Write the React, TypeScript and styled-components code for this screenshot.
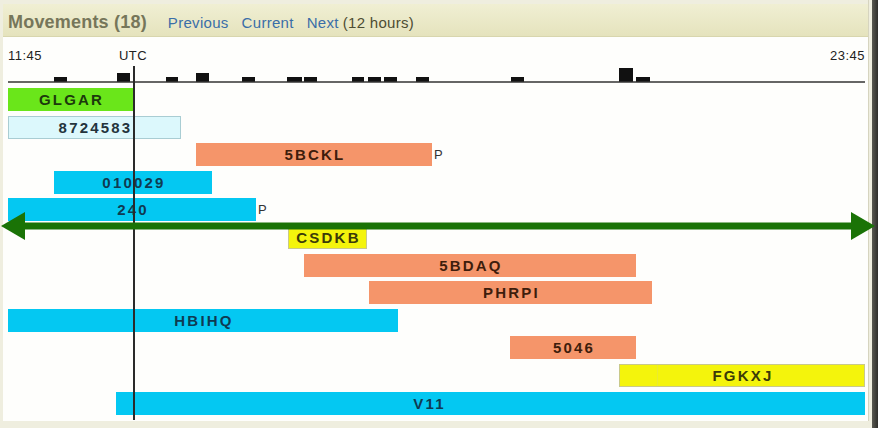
import React from 'react';
import styled, { createGlobalStyle } from 'styled-components';

// 12 hour window, 11:45 -> 23:45, drawn over 857px
const WINDOW_START = 11 * 60 + 45;
const WINDOW_MINUTES = 12 * 60;
const CHART_WIDTH = 857;

const toMinutes = (clock: string) => {
  const [h, m] = clock.split(':').map(Number);
  return h * 60 + m - WINDOW_START;
};

const toX = (clock: string) => {
  const min = Math.max(0, Math.min(WINDOW_MINUTES, toMinutes(clock)));
  return Math.round((min / WINDOW_MINUTES) * CHART_WIDTH);
};

type Tone = 'green' | 'ice' | 'cyan' | 'salmon' | 'yellow';

const tones: Record<Tone, { bg: string; fg: string; border?: string }> = {
  green: { bg: '#6ae61a', fg: '#1c3a0c' },
  ice: { bg: '#dcf8fc', fg: '#24343c', border: '#a9cdd3' },
  cyan: { bg: '#04c8f2', fg: '#0f3b52' },
  salmon: { bg: '#f5956a', fg: '#3e1d0c' },
  yellow: { bg: '#f4f40c', fg: '#3b3b08', border: '#c9c98a' },
};

interface IMovement {
  id: string;
  from: string;
  to: string;
  tone: Tone;
  suffix?: string;
  split?: number;
  shift?: number;
}

const movements: IMovement[] = [
  { id: 'GLGAR', from: '11:45', to: '13:30', tone: 'green' },
  { id: '8724583', from: '11:45', to: '14:10', tone: 'ice' },
  { id: '5BCKL', from: '14:23', to: '17:41', tone: 'salmon', suffix: 'P' },
  { id: '010029', from: '12:24', to: '14:36', tone: 'cyan' },
  { id: '240', from: '11:45', to: '15:13', tone: 'cyan', suffix: 'P' },
  { id: 'CSDKB', from: '15:40', to: '16:47', tone: 'yellow' },
  { id: '5BDAQ', from: '15:54', to: '20:33', tone: 'salmon' },
  { id: 'PHRPI', from: '16:48', to: '20:46', tone: 'salmon' },
  { id: 'HBIHQ', from: '11:45', to: '17:13', tone: 'cyan' },
  { id: '5046', from: '18:47', to: '20:33', tone: 'salmon' },
  { id: 'FGKXJ', from: '20:18', to: '23:45', tone: 'yellow', split: 38 },
  { id: 'V11', from: '13:16', to: '23:45', tone: 'cyan', shift: 124 },
];

// [x, width, height] per histogram column
const histogram: [number, number, number][] = [
  [46, 13, 5], [109, 13, 9], [158, 12, 5], [188, 13, 9], [234, 13, 5],
  [279, 15, 5], [296, 13, 5], [344, 12, 5], [360, 13, 5], [376, 13, 5],
  [408, 13, 5], [503, 13, 5], [611, 14, 14], [628, 14, 5],
];

const NOW = '13:30';

const GlobalStyle = createGlobalStyle`
  html, body {
    margin: 0;
    padding: 0;
    background: #efeedf;
  }
  body {
    font-family: "Liberation Sans", Arial, sans-serif;
  }
`;

const Screen = styled.div`
  position: relative;
  width: 878px;
  height: 428px;
  display: flex;
  background: #efeedf;
  overflow: hidden;
`;

const Panel = styled.div`
  width: 865px;
  margin: 0 0 7px 3px;
  padding-top: 4px;
  display: flex;
  flex-direction: column;
  border-right: 1px solid #d6d4bf;
`;

const EdgeShade = styled.div`
  flex: 1;
  margin-left: 3px;
  background: linear-gradient(to right, #5a5a52, #2e2e2a);
`;

const Header = styled.div`
  height: 33px;
  box-sizing: border-box;
  padding: 5px 0 0 5px;
  display: flex;
  align-items: center;
  background: linear-gradient(to bottom, #f0efd3, #e5e3bd);
  border-bottom: 1px solid #d8d6ae;
`;

const Title = styled.span`
  font-size: 18px;
  font-weight: bold;
  letter-spacing: 0.2px;
  color: #76765a;
  margin-right: 21px;
`;

const NavLink = styled.a`
  font-size: 15px;
  letter-spacing: 0.3px;
  color: #3a6ea8;
  text-decoration: none;
  margin-right: 13px;
  cursor: pointer;

  &:last-of-type {
    margin-right: 4px;
  }
`;

const Range = styled.span`
  font-size: 15px;
  letter-spacing: 0.3px;
  color: #4d4d33;
`;

const Body = styled.div`
  flex: 1;
  padding: 0 3px 0 5px;
  background: #fefefc;
`;

const Chart = styled.div`
  position: relative;
  width: ${CHART_WIDTH}px;
  height: 100%;
`;

const TimeRow = styled.div`
  position: relative;
  padding-top: 11px;
  height: 16px;
  display: flex;
  justify-content: space-between;
  font-size: 13px;
  line-height: 16px;
  letter-spacing: 0.5px;
  color: #222;
`;

const NowLabel = styled.span`
  position: absolute;
  top: 11px;
  transform: translateX(-50%);
`;

const Histogram = styled.svg`
  display: block;
`;

const NowLine = styled.div`
  position: absolute;
  top: 29px;
  bottom: 1px;
  width: 1.5px;
  background: #2a2a2a;
`;

const Rows = styled.div`
  margin-top: 3px;
  display: flex;
  flex-direction: column;
  gap: 4.6px;
`;

const Row = styled.div`
  height: 23px;
  display: flex;
  align-items: center;
`;

const Bar = styled.div<{ $tone: Tone; $split?: number; $shift?: number }>`
  height: 23px;
  box-sizing: border-box;
  flex-shrink: 0;
  display: flex;
  align-items: center;
  justify-content: center;
  padding: 0 ${p => p.$shift ?? 0}px 0 2px;
  font-size: 15px;
  font-weight: bold;
  letter-spacing: 2.2px;
  color: ${p => tones[p.$tone].fg};
  background: ${p =>
    p.$split
      ? `linear-gradient(to right, ${tones[p.$tone].bg} ${p.$split - 1}px, #eaea30 ${p.$split - 1}px, #eaea30 ${p.$split}px, ${tones[p.$tone].bg} ${p.$split}px)`
      : tones[p.$tone].bg};
  border: ${p => (tones[p.$tone].border ? `1px solid ${tones[p.$tone].border}` : 'none')};
`;

const Suffix = styled.span`
  margin-left: 2px;
  font-size: 13px;
  color: #333;
`;

const Arrow = styled.svg`
  position: absolute;
  left: 0;
  top: 211px;
`;

const MovementsPanel: React.FC = () => {
  const nowX = toX(NOW);

  return (
    <Screen>
      <Panel>
        <Header>
          <Title>Movements (18)</Title>
          <NavLink>Previous</NavLink>
          <NavLink>Current</NavLink>
          <NavLink>Next</NavLink>
          <Range>(12 hours)</Range>
        </Header>
        <Body>
          <Chart>
            <TimeRow>
              <span>11:45</span>
              <NowLabel style={{ left: nowX }}>UTC</NowLabel>
              <span>23:45</span>
            </TimeRow>
            <Histogram width={CHART_WIDTH} height={21} viewBox={`0 0 ${CHART_WIDTH} 21`}>
              {histogram.map(([x, w, h]) => (
                <rect key={x} x={x} y={18 - h} width={w} height={h} fill="#111" />
              ))}
              <line x1={0} y1={18} x2={CHART_WIDTH} y2={18} stroke="#333" strokeWidth={1.5} />
            </Histogram>
            <NowLine style={{ left: nowX }} />
            <Rows>
              {movements.map(m => {
                const left = toX(m.from);
                const width = toX(m.to) - left;
                return (
                  <Row key={m.id}>
                    <Bar
                      $tone={m.tone}
                      $split={m.split}
                      $shift={m.shift}
                      style={{ marginLeft: left, width }}
                    >
                      {m.id}
                    </Bar>
                    {m.suffix && <Suffix>{m.suffix}</Suffix>}
                  </Row>
                );
              })}
            </Rows>
          </Chart>
        </Body>
      </Panel>
      <EdgeShade />
      <Arrow width={878} height={31} viewBox="0 0 878 31">
        <rect x={20} y={11.5} width={836} height={7} fill="#1a7306" />
        <polygon points="1,15 25,1 25,29" fill="#1a7306" />
        <polygon points="875,15 851,1 851,29" fill="#1a7306" />
      </Arrow>
    </Screen>
  );
};

const App: React.FC = () => (
  <>
    <GlobalStyle />
    <MovementsPanel />
  </>
);

export default App;
